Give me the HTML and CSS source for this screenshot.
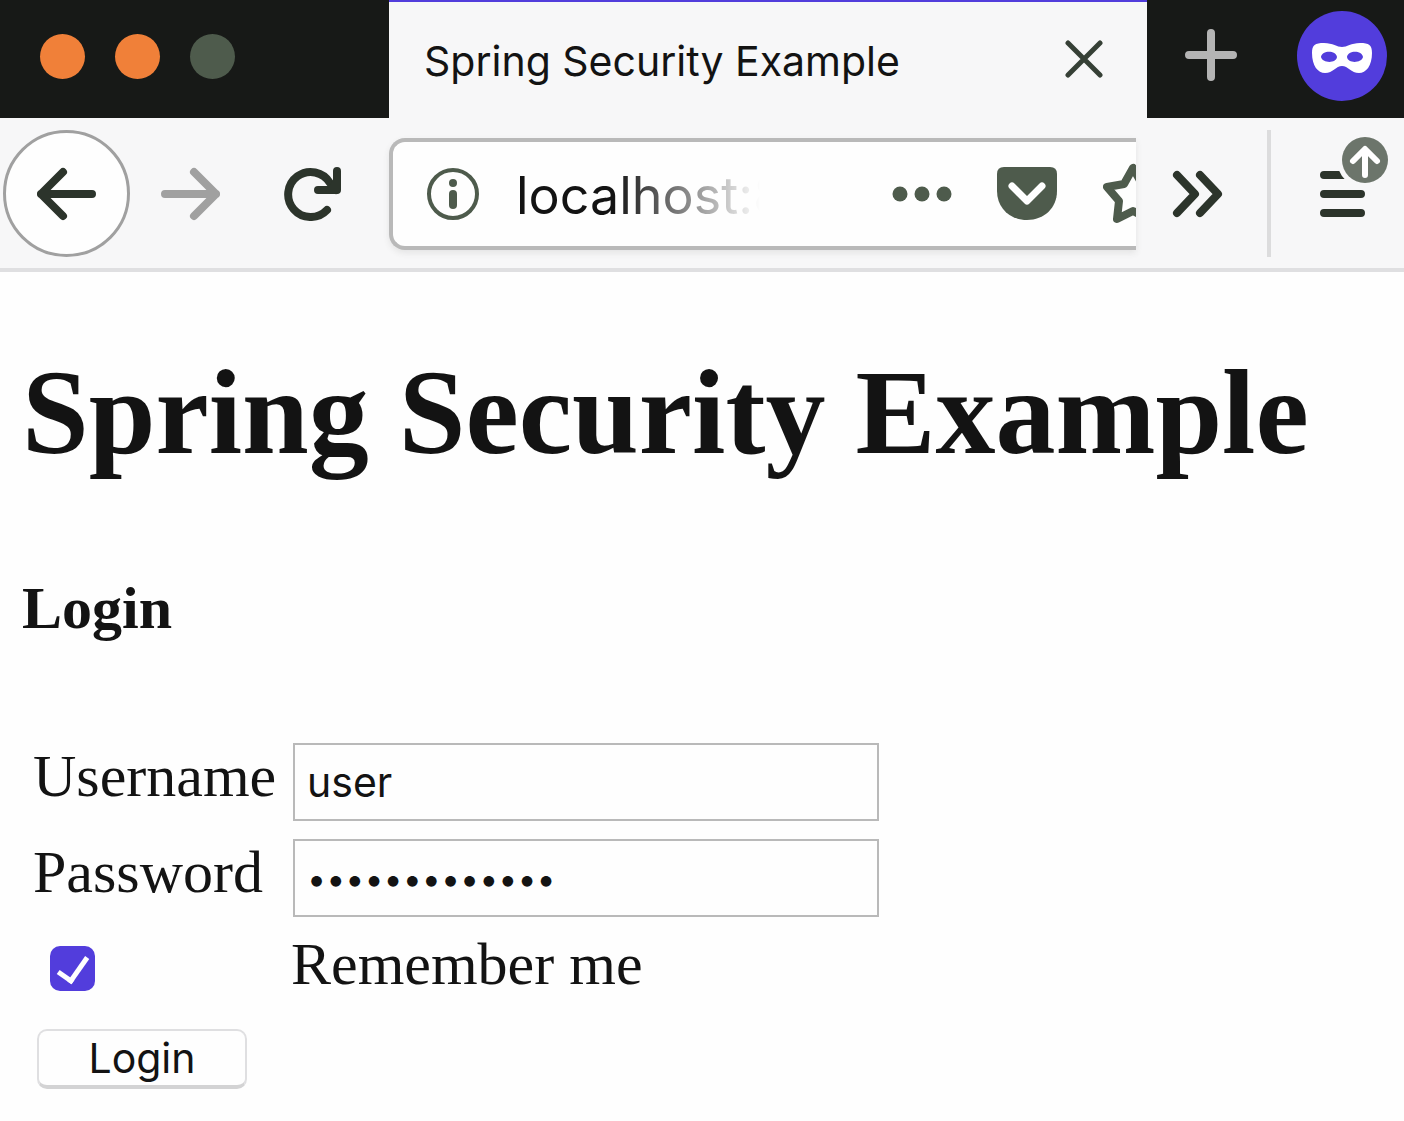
FILE: index.html
```html
<!DOCTYPE html>
<html lang="en">
<head>
<meta charset="utf-8">
<title>Spring Security Example</title>
<link rel="stylesheet" href="styles.css">
</head>
<body>
<header class="browser">
  <div class="tabbar">
    <div class="window-controls">
      <span class="dot"></span>
      <span class="dot"></span>
      <span class="dot dot-muted"></span>
    </div>
    <div class="tab">
      <span class="tab-title">Spring Security Example</span>
      <button class="icon-button" type="button" aria-label="Close tab">
        <svg width="40" height="40" viewBox="0 0 40 40" fill="none" stroke="#364036" stroke-width="5" stroke-linecap="round"><path d="M5 4 37 36M37 4 5 36"/></svg>
      </button>
    </div>
    <div class="tab-actions">
      <button class="icon-button" type="button" aria-label="New tab">
        <svg width="54" height="54" viewBox="0 0 54 54" fill="none" stroke="#b4b4b4" stroke-width="8" stroke-linecap="round"><path d="M27 4V48M5 26H49"/></svg>
      </button>
      <svg class="private" width="90" height="90" viewBox="0 0 90 90" role="img" aria-label="Private browsing">
        <circle cx="45" cy="45" r="45" fill="#523ddc"/>
        <path fill="#fff" fill-rule="evenodd" d="M15 42C15 34 18 32 27 32C36 32 40 36 45 36C50 36 54 32 63 32C72 32 75 34 75 42C75 55 69 62 62 62C54 62 51 55 45 55C39 55 36 62 28 62C21 62 15 55 15 42ZM24 46C25 52 39 53 40 46C39 39 25 39 24 46ZM66 46C65 39 51 39 50 46C51 53 65 52 66 46Z"/>
      </svg>
    </div>
  </div>
  <div class="toolbar">
    <button class="icon-button back" type="button" aria-label="Back">
      <svg width="60" height="54" viewBox="0 0 60 54" fill="none" stroke="#2c342b" stroke-width="8" stroke-linecap="round" stroke-linejoin="round"><path d="M55 27H4M26 5 4 27 26 49"/></svg>
    </button>
    <button class="icon-button forward" type="button" aria-label="Forward">
      <svg width="60" height="54" viewBox="0 0 60 54" fill="none" stroke="#a0a0a0" stroke-width="8" stroke-linecap="round" stroke-linejoin="round"><path d="M5 27H56M34 5 56 27 34 49"/></svg>
    </button>
    <button class="icon-button reload" type="button" aria-label="Reload">
      <svg width="57" height="54" viewBox="0 0 57 54" fill="none" stroke="#2c342b" stroke-width="8" stroke-linecap="round" stroke-linejoin="round"><path d="M43 43A22.500 22.500 0 1 1 46 16L52 23"/><path d="M53 4V23H34"/><path fill="#2c342b" stroke="none" d="M55 4V25H41Z"/></svg>
    </button>
    <div class="urlbar">
      <svg width="54" height="54" viewBox="0 0 54 54" aria-hidden="true"><circle cx="27" cy="27" r="24" fill="none" stroke="#4e5b4c" stroke-width="4"/><circle cx="27" cy="16" r="4" fill="#4e5b4c"/><path d="M27 27V38" stroke="#4e5b4c" stroke-width="8" stroke-linecap="round"/></svg>
      <input class="url" type="text" value="localhost:8" aria-label="Address">
      <div class="url-actions">
        <button class="icon-button" type="button" aria-label="Page actions">
          <svg width="60" height="16" viewBox="0 0 60 16" fill="#4e5b4c"><circle cx="8" cy="8" r="7.500"/><circle cx="30" cy="8" r="7.500"/><circle cx="52" cy="8" r="7.500"/></svg>
        </button>
        <button class="icon-button" type="button" aria-label="Save to Pocket">
          <svg width="60" height="54" viewBox="0 0 60 54"><path fill="#4e5b4c" d="M7 0H53Q60 0 60 7V24C60 41 47 53 30 53S0 41 0 24V7Q0 0 7 0Z"/><path d="M15 19 30 34 45 19" fill="none" stroke="#fff" stroke-width="7" stroke-linecap="round" stroke-linejoin="round"/></svg>
        </button>
        <button class="icon-button star" type="button" aria-label="Bookmark">
          <svg width="66" height="62" viewBox="0 0 66 62" fill="none" stroke="#4e5b4c" stroke-width="8" stroke-linejoin="round"><path d="M31 5 22 21 5 24 17 38 15 56 31 48 47 56 45 38 58 24 40 21Z"/></svg>
        </button>
      </div>
    </div>
    <button class="icon-button overflow" type="button" aria-label="More tools">
      <svg width="51" height="48" viewBox="0 0 51 48" fill="none" stroke="#2c342b" stroke-width="8" stroke-linecap="round" stroke-linejoin="round"><path d="M5 5 23 24 5 43M28 5 46 24 28 43"/></svg>
    </button>
    <span class="separator"></span>
    <button class="icon-button menu" type="button" aria-label="Menu">
      <svg width="70" height="114" viewBox="0 0 70 114"><path d="M5 38H42M5 57H42M5 76H42" stroke="#2c342b" stroke-width="8" stroke-linecap="round"/><circle cx="46" cy="23" r="28" fill="#f7f7f8"/><circle cx="46" cy="23" r="23" fill="#6c756b"/><path d="M46 38V13M34 24 46 12 58 24" fill="none" stroke="#fff" stroke-width="6" stroke-linecap="round" stroke-linejoin="round"/></svg>
    </button>
  </div>
</header>
<main class="page">
  <h1 class="title">Spring Security Example</h1>
  <h3 class="subtitle">Login</h3>
  <form class="login">
    <label class="label" for="username">Username</label>
    <input class="field" id="username" type="text" value="user">
    <label class="label" for="password">Password</label>
    <input class="field password" id="password" type="password" value="springexample">
    <input class="check" id="remember" type="checkbox" checked>
    <label class="remember" for="remember">Remember me</label>
    <button class="submit" type="button">Login</button>
  </form>
</main>
</body>
</html>
```
FILE: styles.css
```css
* { box-sizing: border-box; }
body { margin: 0; background: #fefefe; color: #131313; }
svg { display: block; flex: none; }

.icon-button { flex: none; display: flex; align-items: center; justify-content: center; padding: 0; border: 0; background: none; }

.tabbar { display: flex; height: 118px; background: #171917; }
.window-controls { flex: none; display: flex; gap: 30px; width: 389px; padding: 34px 40px; }
.dot { width: 45px; height: 45px; border-radius: 50%; background: #f08039; }
.dot-muted { background: #4e5b4c; }
.tab { flex: 1; min-width: 0; display: flex; align-items: center; justify-content: space-between; padding: 0 44px 2px 35px; border-top: 2px solid #523ddc; background: #f7f7f8; }
.tab-title { padding-top: 4px; font: 41px/50px Inter, sans-serif; white-space: nowrap; }
.tab-actions { flex: none; display: flex; align-items: center; justify-content: space-between; width: 257px; padding: 0 17px 6px 37px; }

.toolbar { display: flex; align-items: center; padding: 12px 15px 11px 3px; border-bottom: 4px solid #dfdfe1; background: #f7f7f8; }
.back { width: 127px; height: 127px; border: 3px solid #a0a0a0; border-radius: 50%; background: #fefefe; }
.forward { margin-left: 30px; }
.reload { margin-left: 64px; }
.urlbar { flex: 1; min-width: 0; display: flex; align-items: center; height: 112px; margin-left: 48px; padding-left: 33px; overflow: hidden; border: 4px solid #b9b9b9; border-right: 0; border-radius: 16px 0 0 16px; background: #fefefe; box-shadow: 0 3px 6px #e4e4e4; }
.url { flex: none; width: 244px; margin-left: 36px; padding: 4px 0 0; border: 0; background: none; color: #131313; font: 52px/64px Inter, sans-serif; mask-image: linear-gradient(to right, #000 40%, transparent); }
.url-actions { display: flex; align-items: center; gap: 45px; margin-left: auto; margin-right: -32px; }
.overflow { margin-left: 36px; }
.separator { width: 4px; height: 127px; margin-left: 44px; background: #dcdcdd; }
.menu { margin-left: 48px; }

.page { padding: 72px 22px 32px; font: 60px/70px "Liberation Serif", serif; }
.title { margin: 0; font-size: 120px; line-height: 138px; }
.subtitle { margin: 91px 0 0; font-size: 60px; line-height: 70px; }
.login { display: grid; grid-template-columns: 258px 588px; align-items: center; row-gap: 18px; margin-top: 100px; padding-left: 11px; }
.label { padding-bottom: 12px; line-height: 66px; }
.field { width: 586px; height: 78px; margin: 0 0 0 2px; padding: 0 12px; border: 2px solid #b9b9b9; background: #fefefe; color: #131313; font: 41px/50px Inter, sans-serif; }
.password { font-size: 34px; }
.check { appearance: none; width: 45px; height: 45px; margin: 0 0 0 17px; border-radius: 10px; background: #523ddc; display: grid; place-items: center; }
.check::before { content: ""; width: 13px; height: 26px; margin-bottom: 4px; border: solid #fefefe; border-width: 0 5px 5px 0; rotate: 35deg; }
.remember { padding-bottom: 8px; line-height: 58px; }
.submit { width: 210px; height: 60px; margin: 10px 0 0 4px; padding: 0; border: 2px solid #dfdfe1; border-bottom: 4px solid #d3d3d4; border-radius: 10px; background: #fefefe; color: #131313; font: 41px/50px Inter, sans-serif; }
```
